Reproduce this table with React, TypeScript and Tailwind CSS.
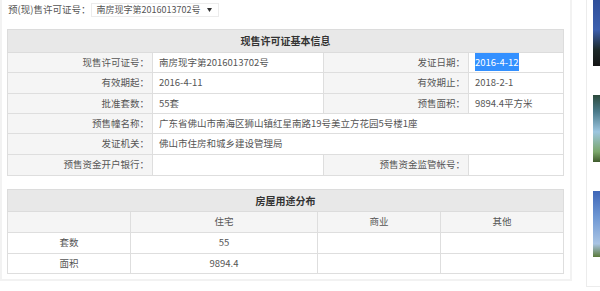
import React from "react";

const font = "font-['Microsoft_YaHei','Noto_Sans_CJK_SC',sans-serif]";

const lbl = "bg-[#f5f5f5] border border-[#dedede] text-right pr-[3px] text-[#555] font-normal whitespace-nowrap";
const val = "bg-white border border-[#dedede] text-left pl-[6px] text-[#555] whitespace-nowrap";

export default function App() {
  return (
    <div className={`w-[600px] h-[291px] overflow-hidden bg-white flex text-[9.5px] leading-none ${font}`}>
      {/* LEFT PANEL */}
      <div className="w-[572px] h-[281px] shrink-0 border-2 border-t-0 border-[#f2f2f2] pl-[5px] pr-[7px]">
        {/* permit select */}
        <div className="flex items-center h-[18px] pt-[1px] whitespace-nowrap">
          <span className="ml-[1px] text-[#555]">预(现)售许可证号：</span>
          <div className="ml-[1px] w-[128px] h-[14px] border border-[#ececec] flex items-center pl-[4px] text-[#555] text-[9px]">
            <span>南房现字第2016013702号</span>
            <svg width="5" height="4" viewBox="0 0 5 4" className="ml-[7px]">
              <path d="M0 0h5L2.5 4z" fill="#333" />
            </svg>
          </div>
        </div>

        {/* BASIC INFO */}
        <table className="mt-[11px] w-[556px] table-fixed border-collapse">
          <colgroup>
            <col className="w-[145px]" />
            <col className="w-[171px]" />
            <col className="w-[145px]" />
            <col className="w-[95px]" />
          </colgroup>
          <thead>
            <tr className="h-[23px]">
              <th colSpan={4} className="bg-[#e8e8e8] border border-[#dcdcdc] text-[#333] text-[10px] font-bold text-center">
                现售许可证基本信息
              </th>
            </tr>
          </thead>
          <tbody>
            <tr className="h-[20px]">
              <td className={lbl}>现售许可证号：</td>
              <td className={val}>南房现字第2016013702号</td>
              <td className={lbl}>发证日期：</td>
              <td className={val}>
                <span className="bg-[#3390ff] text-white py-[2px]">2016-4-12</span>
              </td>
            </tr>
            <tr className="h-[21px]">
              <td className={lbl}>有效期起：</td>
              <td className={val}>2016-4-11</td>
              <td className={lbl}>有效期止：</td>
              <td className={val}>2018-2-1</td>
            </tr>
            <tr className="h-[20px]">
              <td className={lbl}>批准套数：</td>
              <td className={val}>55套</td>
              <td className={lbl}>预售面积：</td>
              <td className={val}>9894.4平方米</td>
            </tr>
            <tr className="h-[20px]">
              <td className={lbl}>预售幢名称：</td>
              <td colSpan={3} className={val}>广东省佛山市南海区狮山镇红星南路19号美立方花园5号楼1座</td>
            </tr>
            <tr className="h-[21px]">
              <td className={lbl}>发证机关：</td>
              <td colSpan={3} className={val}>佛山市住房和城乡建设管理局</td>
            </tr>
            <tr className="h-[21px]">
              <td className={lbl}>预售资金开户银行：</td>
              <td className={val}></td>
              <td className={lbl}>预售资金监管帐号：</td>
              <td className={val}></td>
            </tr>
          </tbody>
        </table>

        {/* USAGE DISTRIBUTION */}
        <table className="mt-[13px] w-[556px] table-fixed border-collapse text-center text-[#555]">
          <colgroup>
            <col className="w-[123px]" />
            <col className="w-[187px]" />
            <col className="w-[123px]" />
            <col className="w-[123px]" />
          </colgroup>
          <thead>
            <tr className="h-[22px]">
              <th colSpan={4} className="bg-[#e8e8e8] border border-[#dcdcdc] text-[#333] text-[10px] font-bold">
                房屋用途分布
              </th>
            </tr>
          </thead>
          <tbody>
            <tr className="h-[21px] bg-[#f5f5f5]">
              <td className="border border-[#dedede]"></td>
              <td className="border border-[#dedede]">住宅</td>
              <td className="border border-[#dedede]">商业</td>
              <td className="border border-[#dedede]">其他</td>
            </tr>
            <tr className="h-[21px]">
              <td className="border border-[#dedede]">套数</td>
              <td className="border border-[#dedede]">55</td>
              <td className="border border-[#dedede]"></td>
              <td className="border border-[#dedede]"></td>
            </tr>
            <tr className="h-[20px]">
              <td className="border border-[#dedede]">面积</td>
              <td className="border border-[#dedede]">9894.4</td>
              <td className="border border-[#dedede]"></td>
              <td className="border border-[#dedede]"></td>
            </tr>
          </tbody>
        </table>
      </div>

      {/* RIGHT PANEL */}
      <div className="ml-[14px] w-[120px] h-[287px] shrink-0 border-l border-b border-[#ececec] pl-[6px]">
        <div className="w-[90px] h-[66px] bg-[linear-gradient(180deg,#2f4f9a_0%,#3c5fae_45%,#1d2a2a_75%,#141414_100%)]" />
        <div className="mt-[29px] w-[90px] h-[67px] bg-[linear-gradient(180deg,#2c4a3c_0%,#4a7a8a_25%,#9cc6e0_55%,#7aa66a_85%,#3f5a2c_100%)]" />
        <div className="mt-[29px] w-[90px] h-[66px] bg-[linear-gradient(180deg,#3e66b8_0%,#6f98d4_40%,#a9c4e4_80%,#5b7a3a_100%)]" />
      </div>
    </div>
  );
}
